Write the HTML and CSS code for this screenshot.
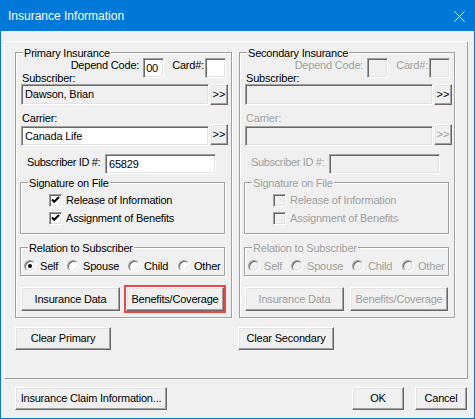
FILE: index.html
```html
<!DOCTYPE html>
<html>
<head>
<meta charset="utf-8">
<title>Insurance Information</title>
<link rel="stylesheet" href="styles.css">
</head>
<body>
<div class="window">
  <div class="titlebar">
    <span class="title">Insurance Information</span>
    <svg class="close" width="11" height="11" viewBox="0 0 11 11"><path d="M0.5 0.5 L10.5 10.5 M10.5 0.5 L0.5 10.5" stroke="#fff" stroke-width="1" fill="none"/></svg>
  </div>
  <div class="panel">
    <div class="groups">
      <div class="group ins-group primary">
        <span class="legend">Primary Insurance</span>
        <div class="codes">
          <span class="code-lbl">Depend Code:</span><span class="box">00</span>
          <span class="card-lbl">Card#:</span><span class="box"></span>
        </div>
        <div class="row-lbl">Subscriber:</div>
        <div class="field-row sub-row"><div class="field ro">Dawson, Brian</div><button class="btn more">&gt;&gt;</button></div>
        <div class="row-lbl carrier-lbl">Carrier:</div>
        <div class="field-row carrier-row"><div class="field">Canada Life</div><button class="btn more">&gt;&gt;</button></div>
        <div class="id-row"><span class="id-lbl">Subscriber ID #:</span><div class="field id-field">65829</div></div>
        <div class="group sig">
          <span class="legend">Signature on File</span>
          <div class="check-row"><span class="check"><svg width="11" height="11" viewBox="0 0 11 11"><polyline points="2,4.5 4.2,6.8 9,2" fill="none" stroke="#000" stroke-width="2"/></svg></span><span>Release of Information</span></div>
          <div class="check-row"><span class="check"><svg width="11" height="11" viewBox="0 0 11 11"><polyline points="2,4.5 4.2,6.8 9,2" fill="none" stroke="#000" stroke-width="2"/></svg></span><span>Assignment of Benefits</span></div>
        </div>
        <div class="group rel">
          <span class="legend">Relation to Subscriber</span>
          <div class="radios">
            <span class="ri self"><span class="radio on"></span>Self</span>
            <span class="ri spouse"><span class="radio"></span>Spouse</span>
            <span class="ri child"><span class="radio"></span>Child</span>
            <span class="ri other"><span class="radio"></span>Other</span>
          </div>
        </div>
        <div class="btn-row">
          <button class="btn ins-data">Insurance Data</button>
          <div class="hl on"><button class="btn benef">Benefits/Coverage</button></div>
        </div>
      </div>
      <div class="group ins-group secondary">
        <span class="legend">Secondary Insurance</span>
        <div class="codes">
          <span class="code-lbl dis">Depend Code:</span><span class="box off"></span>
          <span class="card-lbl dis">Card#:</span><span class="box off"></span>
        </div>
        <div class="row-lbl">Subscriber:</div>
        <div class="field-row sub-row"><div class="field ro"></div><button class="btn more">&gt;&gt;</button></div>
        <div class="row-lbl carrier-lbl dis">Carrier:</div>
        <div class="field-row carrier-row"><div class="field ro"></div><button class="btn more dis">&gt;&gt;</button></div>
        <div class="id-row"><span class="id-lbl dis">Subscriber ID #:</span><div class="field id-field ro"></div></div>
        <div class="group sig">
          <span class="legend dis">Signature on File</span>
          <div class="check-row dis"><span class="check off"></span><span>Release of Information</span></div>
          <div class="check-row dis"><span class="check off"></span><span>Assignment of Benefits</span></div>
        </div>
        <div class="group rel">
          <span class="legend dis">Relation to Subscriber</span>
          <div class="radios dis">
            <span class="ri self"><span class="radio off"></span>Self</span>
            <span class="ri spouse"><span class="radio off"></span>Spouse</span>
            <span class="ri child"><span class="radio off"></span>Child</span>
            <span class="ri other"><span class="radio off"></span>Other</span>
          </div>
        </div>
        <div class="btn-row">
          <button class="btn ins-data dis">Insurance Data</button>
          <div class="hl"><button class="btn benef dis">Benefits/Coverage</button></div>
        </div>
      </div>
    </div>
    <div class="clear-row">
      <button class="btn clear-p">Clear Primary</button>
      <button class="btn clear-s">Clear Secondary</button>
    </div>
  </div>
  <div class="footer">
    <button class="btn claim">Insurance Claim Information...</button>
    <button class="btn ok">OK</button>
    <button class="btn cancel">Cancel</button>
  </div>
</div>
</body>
</html>
```
FILE: styles.css
```css
* { box-sizing: border-box; }
html, body { margin: 0; padding: 0; }
body {
  width: 475px; height: 419px; overflow: hidden;
  background: #f0f0f0;
  font-family: "Liberation Sans", Arial, sans-serif;
  font-size: 11px; line-height: 13px; letter-spacing: -0.2px;
  color: #000;
}
.window {
  width: 475px; height: 419px;
  border: 1px solid #0078d7;
  background: #f0f0f0;
  display: flex; flex-direction: column;
}
.titlebar {
  flex: none; height: 30px;
  background: #0078d7; color: #fff;
  display: flex; align-items: center;
  padding: 0 9px 0 7px;
  font-size: 12px; letter-spacing: 0;
}
.title { flex: 1; }
.close { display: block; }

.panel {
  flex: none;
  margin: 10px 0 0 3px;
  width: 464px; height: 338px;
  border: 1px solid;
  border-color: #fff #a0a0a0 #a0a0a0 #fff;
  padding: 10px 0 0 10px;
}
.groups { display: flex; gap: 7px; }
.group {
  position: relative;
  border: 1px solid #a0a0a0;
  box-shadow: inset 1px 1px #fff, 1px 1px #fff;
}
.ins-group { height: 266px; }
.primary { width: 217px; }
.secondary { width: 216px; }
.legend {
  position: absolute; top: -6px; left: 7px;
  padding: 0 1px; background: #f0f0f0;
  white-space: nowrap;
}
.dis { color: #a0a0a0; }

.sunk, .box, .field, .check {
  border: 1px solid;
  border-color: #a0a0a0 #fff #fff #a0a0a0;
  box-shadow: inset 1px 1px #696969, inset -1px -1px #e3e3e3;
  background: #fff;
}
.codes {
  display: flex; justify-content: flex-end; align-items: flex-start;
  height: 14px; margin-top: 5px; padding-right: 5px;
}
.secondary .codes { padding-right: 4px; }
.code-lbl { padding-top: 1px; margin-right: 4px; }
.card-lbl { padding-top: 1px; margin: 0 1px 0 8px; }
.box {
  flex: none; width: 21px; height: 20px;
  padding-left: 2px; line-height: 18px;
}
.box.off, .field.ro, .check.off { background: #f0f0f0; }

.row-lbl { padding-left: 6px; height: 13px; }
.carrier-lbl { margin-top: 7px; }
.field-row { display: flex; align-items: flex-start; padding-left: 5px; }
.sub-row { margin-top: -1px; }
.field {
  flex: none; width: 188px; height: 21px;
  padding-left: 3px; line-height: 19px;
  white-space: nowrap; overflow: hidden;
}
.carrier-row { margin-top: 1px; }
.carrier-row .field { height: 20px; line-height: 18px; }

.btn {
  font: inherit; letter-spacing: inherit; color: #000;
  background: #f0f0f0;
  border: 1px solid;
  border-color: #fff #696969 #696969 #fff;
  box-shadow: inset -1px -1px #a0a0a0, inset 1px 1px #e3e3e3;
  padding: 0; margin: 0;
  flex: none; text-align: center;
  display: block;
}
.btn.dis { color: #a0a0a0; }
.more { width: 18px; height: 21px; margin-left: 1px; line-height: 17px; letter-spacing: 0; }
.carrier-row .more { margin-top: -2px; }

.id-row { display: flex; align-items: flex-start; margin-top: 8px; padding-left: 11px; }
.id-lbl { flex: none; width: 78px; margin-top: 2px; white-space: nowrap; letter-spacing: -0.35px; }
.id-field { width: 111px; height: 20px; line-height: 18px; }

.sig {
  margin: 8px 0 0 4px; width: 205px; height: 52px;
  padding: 11px 0 0 28px;
}
.check-row { display: flex; align-items: center; height: 13px; }
.check-row + .check-row { margin-top: 5px; }
.check { flex: none; width: 13px; height: 13px; margin-right: 4px; position: relative; }
.check svg { position: absolute; left: 0; top: 0; display: block; }

.rel {
  margin: 13px 0 0 4px; width: 205px; height: 29px;
  padding: 12px 0 0 3px;
}
.radios { display: flex; align-items: center; height: 12px; }
.ri { display: flex; align-items: center; flex: none; }
.ri.self { width: 43px; }
.ri.spouse { width: 61px; }
.ri.child { width: 50px; }
.radio {
  flex: none; position: relative;
  width: 12px; height: 12px; border-radius: 50%;
  margin-right: 4px;
  border: 1px solid;
  border-color: #a0a0a0 #fff #fff #a0a0a0;
  box-shadow: inset 1px 1px #696969, inset -1px -1px #e3e3e3;
  background: #fff;
}
.radio.off { background: #f0f0f0; }
.radio.on::after {
  content: ""; position: absolute; left: 3px; top: 3px;
  width: 4px; height: 4px; border-radius: 50%; background: #000;
}

.btn-row { display: flex; align-items: center; margin: 9px 0 0 5px; }
.btn-row .btn { height: 24px; }
.ins-data { width: 99px; }
.hl { border: 2px solid transparent; margin-left: 4px; }
.hl.on { border-color: #ea4848; }
.benef { width: 98px; }

.clear-row { display: flex; margin-top: 9px; }
.clear-p, .clear-s { width: 96px; height: 23px; }
.clear-s { margin-left: 127px; }

.footer { display: flex; margin: 8px 7px 0 14px; }
.footer .btn { height: 23px; }
.claim { width: 152px; }
.ok { width: 52px; margin-left: auto; }
.cancel { width: 52px; margin-left: 11px; }
```
